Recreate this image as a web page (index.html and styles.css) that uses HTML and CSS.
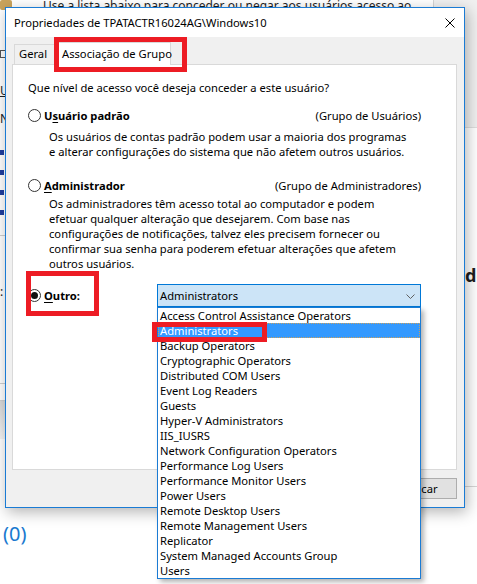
FILE: index.html
```html
<!DOCTYPE html>
<html lang="pt-BR">
<head>
<meta charset="utf-8">
<title>Propriedades de TPATACTR16024AG\Windows10</title>
<link rel="stylesheet" href="styles.css">
</head>
<body>
<div class="bg">
  <div class="bg-body">
    <div class="bg-left">
      <span class="bg-icon"></span>
      <span class="bg-check"></span>
      <span class="bg-txt bg-us">Us</span>
      <span class="bg-txt bg-n">N</span>
      <span class="bg-mark first"></span>
      <span class="bg-mark"></span>
      <span class="bg-mark"></span>
      <span class="bg-mark"></span>
      <span class="bg-rule"></span>
      <span class="bg-txt bg-colon">:</span>
      <span class="bg-rule r2"></span>
      <span class="bg-rule r3"></span>
      <span class="bg-band"></span>
    </div>
    <div class="bg-center">
      <p class="bg-intro">Use a lista abaixo para conceder ou negar aos usuários acesso ao</p>
    </div>
    <div class="bg-right">
      <div class="bg-gray"></div>
      <div class="bg-do">do</div>
      <div class="bg-line"></div>
    </div>
  </div>
  <div class="bg-foot">(0)</div>
</div>

<div class="dlg">
  <div class="dlg-title">
    <span class="dlg-caption">Propriedades de TPATACTR16024AG\Windows10</span>
    <svg class="close" width="10" height="10" viewBox="0 0 10 10"><path d="M0.5 0.5L9.5 9.5M9.5 0.5L0.5 9.5" stroke="#000" stroke-width="1" fill="none"/></svg>
  </div>
  <div class="dlg-body">
    <div class="tabs">
      <div class="tab">Geral</div>
      <div class="tab active">Associação de Grupo<span class="annot annot-tab"></span></div>
    </div>
    <div class="panel">
      <div class="q">Que nível de acesso você deseja conceder a este usuário?</div>
      <div class="opt opt-std">
        <span class="opt-label"><span class="radio"></span><b>U<u>s</u>uário padrão</b></span>
        <span class="opt-group">(Grupo de Usuários)</span>
      </div>
      <div class="desc desc-std">Os usuários de contas padrão podem usar a maioria dos programas<br>e alterar configurações do sistema que não afetem outros usuários.</div>
      <div class="opt opt-adm">
        <span class="opt-label"><span class="radio"></span><b><u>A</u>dministrador</b></span>
        <span class="opt-group">(Grupo de Administradores)</span>
      </div>
      <div class="desc desc-adm">Os administradores têm acesso total ao computador e podem<br>efetuar qualquer alteração que desejarem. Com base nas<br>configurações de notificações, talvez eles precisem fornecer ou<br>confirmar sua senha para poderem efetuar alterações que afetem<br>outros usuários.</div>
      <div class="opt opt-other">
        <span class="opt-label"><span class="radio checked"></span><b><u>O</u>utro:</b><span class="annot annot-other"></span></span>
        <div class="combo">
          <span class="combo-value">Administrators</span>
          <svg class="chev" width="9" height="5" viewBox="0 0 9 5"><path d="M0.5 0.5L4.5 4.5L8.5 0.5" stroke="#606060" stroke-width="1" fill="none"/></svg>
          <div class="list">
            <div class="item">Access Control Assistance Operators</div>
            <div class="item sel">Administrators<span class="annot annot-item"></span></div>
            <div class="item">Backup Operators</div>
            <div class="item">Cryptographic Operators</div>
            <div class="item">Distributed COM Users</div>
            <div class="item">Event Log Readers</div>
            <div class="item">Guests</div>
            <div class="item">Hyper-V Administrators</div>
            <div class="item">IIS_IUSRS</div>
            <div class="item">Network Configuration Operators</div>
            <div class="item">Performance Log Users</div>
            <div class="item">Performance Monitor Users</div>
            <div class="item">Power Users</div>
            <div class="item">Remote Desktop Users</div>
            <div class="item">Remote Management Users</div>
            <div class="item">Replicator</div>
            <div class="item">System Managed Accounts Group</div>
            <div class="item">Users</div>
          </div>
        </div>
      </div>
    </div>
    <div class="buttons">
      <span class="btn">OK</span>
      <span class="btn">Cancelar</span>
      <span class="btn">Aplicar</span>
    </div>
  </div>
</div>
</body>
</html>
```
FILE: styles.css
```css
* { box-sizing: border-box; margin: 0; padding: 0; }
html, body { width: 477px; height: 584px; overflow: hidden; }
body {
  position: relative;
  background: #fff;
  font-family: "Noto Sans", "Open Sans", "DejaVu Sans", sans-serif;
  font-size: 11.2px;
  line-height: 15px;
  color: #000;
}

/* background window */
.bg { display: flex; flex-direction: column; height: 584px; }
.bg-body { display: flex; height: 518px; }
.bg-left { width: 43px; display: flex; flex-direction: column; align-items: flex-start; }
.bg-center { flex: 1; min-width: 0; }
.bg-right { width: 44px; display: flex; flex-direction: column; }
.bg-intro { margin-top: -2px; white-space: nowrap; overflow: hidden; color: #1e1e1e; font-size: 12px; }
.bg-icon { width: 12px; height: 10px; background: #c9a35c; border-radius: 2px; }
.bg-check { margin-top: 40px; width: 7px; height: 8px; border: 1px solid #555; }
.bg-txt { font-size: 12px; line-height: 15px; color: #222; }
.bg-us { margin-top: 25px; text-decoration: underline; }
.bg-n { margin-top: 13px; }
.bg-mark { width: 4px; height: 5px; background: #1f3f9e; margin-top: 15px; }
.bg-mark.first { margin-top: 24px; }
.bg-rule { width: 43px; height: 1px; background: #cfcfcf; margin-top: 20px; }
.bg-colon { margin-top: 48px; }
.bg-rule.r2 { margin-top: 84px; }
.bg-rule.r3 { margin-top: 16px; }
.bg-band { width: 43px; height: 38px; background: linear-gradient(#d8d8d8, #f4f4f4); }
.bg-gray { height: 128px; background: #f0f0f0; border-left: 1px solid #d4d4d4; border-bottom: 1px solid #dedede; }
.bg-do { margin-top: 137px; padding-left: 32px; font-weight: 700; font-size: 18px; line-height: 20px; color: #1e1e1e; white-space: nowrap; }
.bg-line { margin-top: 201px; height: 1px; background: #d6d6d6; }
.bg-foot { padding-left: 3px; margin-top: 4px; font-size: 20px; line-height: 24px; color: #1a79cf; }

/* dialog */
.dlg {
  position: absolute;
  left: 5px;
  top: 7px;
  width: 460px;
  height: 501px;
  border: 1px solid #1a7bd4;
  background: #f0f0f0;
  box-shadow: 2px 4px 14px rgba(0, 0, 0, 0.3);
  display: flex;
  flex-direction: column;
}
.dlg-title {
  height: 29px;
  flex: none;
  background: #fff;
  display: flex;
  align-items: center;
  justify-content: space-between;
  padding: 0 9px 0 8px;
  white-space: nowrap;
}
.dlg-body {
  flex: 1;
  display: flex;
  flex-direction: column;
  padding: 5px 7px 0 6px;
}
.tabs {
  display: flex;
  align-items: flex-end;
  height: 23px;
  padding-left: 2px;
  margin-bottom: -1px;
  position: relative;
  z-index: 1;
}
.tab {
  position: relative;
  height: 20px;
  margin-bottom: 1px;
  padding-left: 4px;
  width: 42px;
  border: 1px solid #d9d9d9;
  border-bottom: none;
  background: #f0f0f0;
  line-height: 18px;
  white-space: nowrap;
}
.tab.active {
  height: 23px;
  margin-bottom: 0;
  width: 115px;
  padding-left: 5px;
  background: #fff;
  line-height: 21px;
}
.panel {
  flex: none;
  height: 406px;
  border: 1px solid #d9d9d9;
  background: #fff;
  padding: 15px 35px 0 15px;
}
.opt { display: flex; align-items: center; justify-content: space-between; height: 15px; }
.opt-std { margin-top: 13px; }
.opt-adm { margin-top: 19px; }
.opt-other { margin-top: 13px; height: 23px; }
.opt-label { position: relative; display: flex; align-items: center; white-space: nowrap; }
.opt-label b { margin-left: 3px; font-weight: 700; }
.opt-label u { text-underline-offset: 2px; }
.radio {
  width: 13px;
  height: 13px;
  border: 1px solid #333;
  border-radius: 50%;
  background: #fff;
  display: flex;
  align-items: center;
  justify-content: center;
}
.radio.checked::after {
  content: "";
  width: 7px;
  height: 7px;
  border-radius: 50%;
  background: #111;
}
.opt-group { white-space: nowrap; }
.desc { margin-left: 21px; white-space: nowrap; }
.desc-std { margin-top: 6px; }
.desc-adm { margin-top: 3px; }

.combo {
  position: relative;
  width: 264px;
  height: 23px;
  border: 1px solid #0078d7;
  background: #cce4f7;
  padding-left: 2px;
  display: flex;
  align-items: center;
  justify-content: space-between;
  padding-right: 5px;
}
.chev { margin-top: 1px; }
.list {
  position: absolute;
  top: calc(100% + 1px);
  left: -1px;
  width: 264px;
  border: 1px solid #1a7bd4;
  background: #fff;
  box-shadow: 3px 3px 5px rgba(0, 0, 0, 0.3);
  z-index: 5;
}
.item { position: relative; height: 15px; line-height: 15px; padding-left: 2px; white-space: nowrap; }
.item.sel {
  background: #3399ff;
  color: #fff;
  outline: 1px dotted #c8a060;
  outline-offset: -1px;
}

/* red annotations */
.annot { position: absolute; border: 5px solid #ed1c24; pointer-events: none; }
.annot-tab { left: -3px; top: -6px; width: 133px; height: 35px; }
.annot-other { left: -2px; top: -17px; width: 73px; height: 45px; }
.annot-item { left: -6px; top: -1px; width: 115px; height: 20px; }

.buttons {
  display: flex;
  justify-content: flex-end;
  gap: 6px;
  margin-top: 8px;
}
.btn {
  width: 75px;
  height: 21px;
  border: 1px solid #adadad;
  background: #e1e1e1;
  text-align: center;
  line-height: 19px;
}
```
